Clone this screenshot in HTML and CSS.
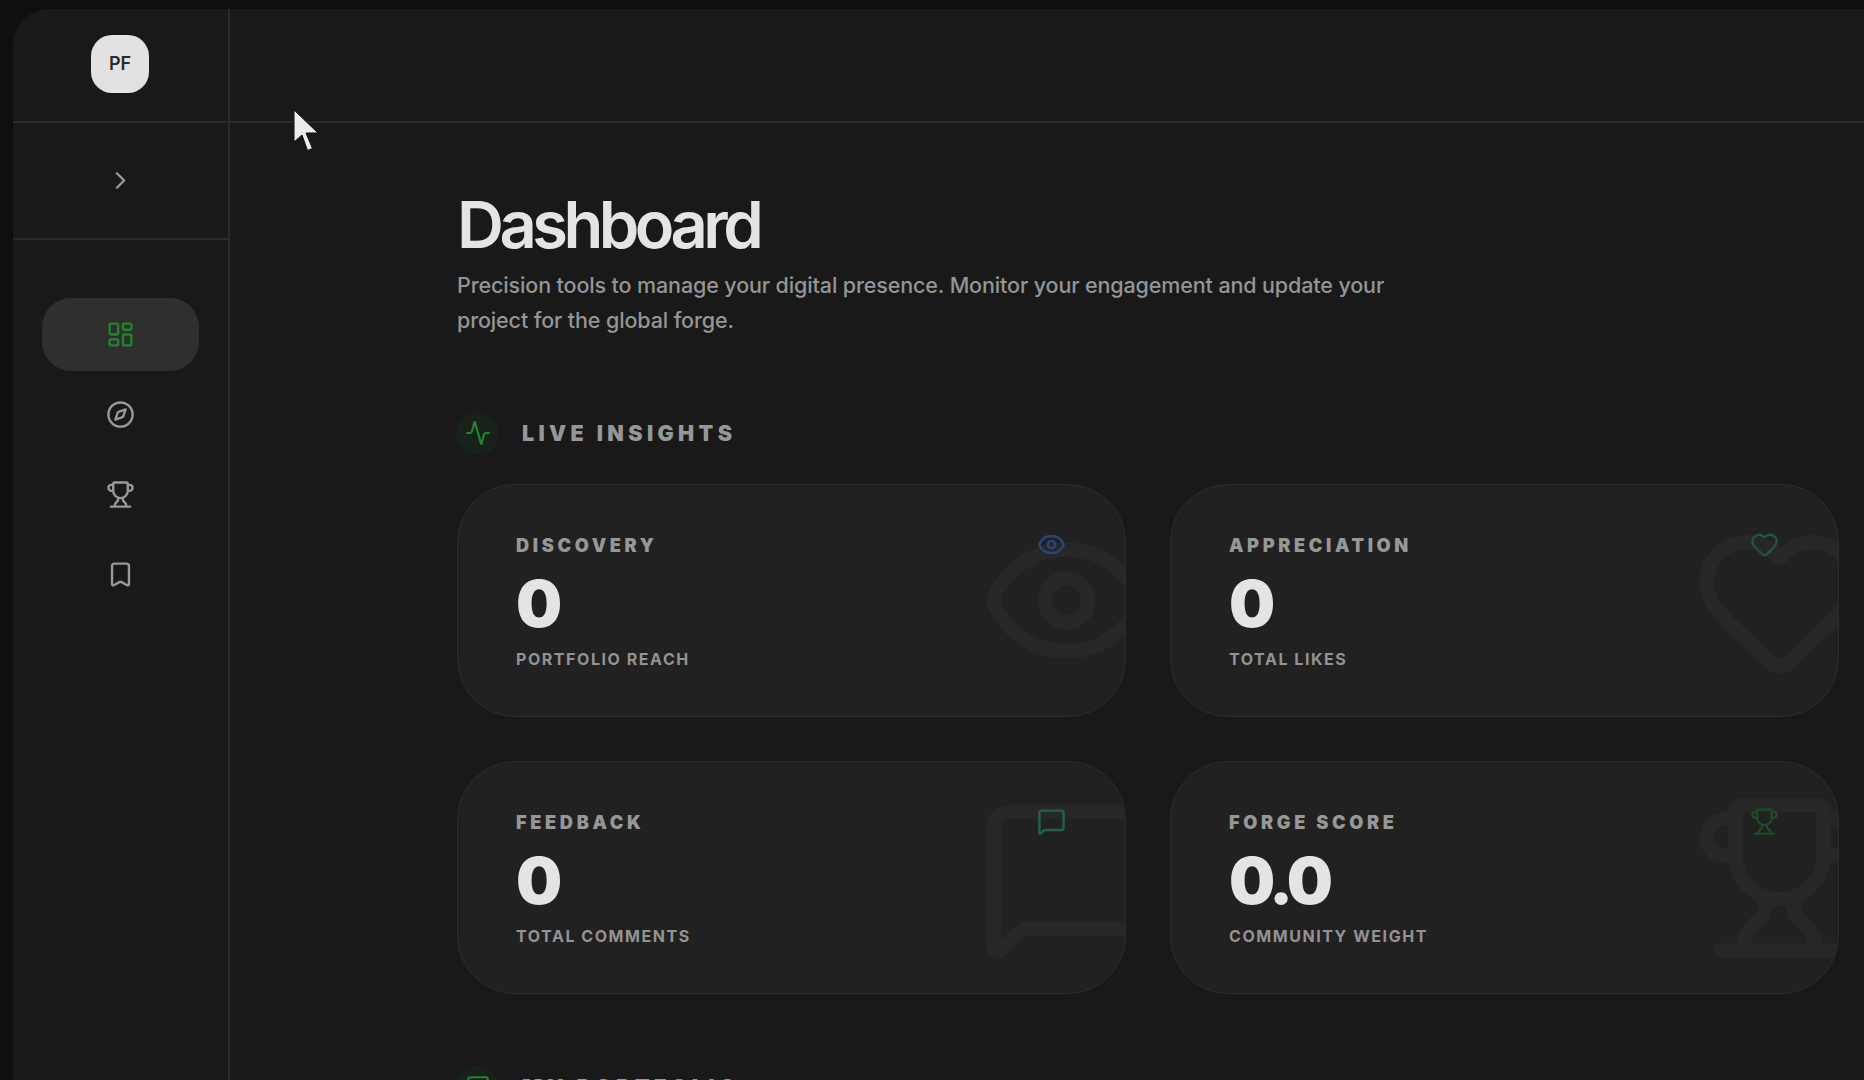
FILE: index.html
```html
<!DOCTYPE html>
<html lang="en">
<head>
<meta charset="utf-8">
<title>Dashboard</title>
<link rel="stylesheet" href="styles.css">
</head>
<body>
<svg class="sprite" aria-hidden="true">
  <symbol id="eye" viewBox="0 0 24 24"><path d="M2.062 12.348a1 1 0 0 1 0-.696 10.75 10.75 0 0 1 19.876 0 1 1 0 0 1 0 .696 10.75 10.75 0 0 1-19.876 0"/><circle cx="12" cy="12" r="3"/></symbol>
  <symbol id="heart" viewBox="0 0 24 24"><path d="M2 9.5a5.5 5.5 0 0 1 9.591-3.676.56.56 0 0 0 .818 0A5.49 5.49 0 0 1 22 9.5c0 2.29-1.5 4-3 5.5l-5.492 5.313a2 2 0 0 1-3 .019L5 15c-1.5-1.5-3-3.2-3-5.5"/></symbol>
  <symbol id="message" viewBox="0 0 24 24"><path d="M22 17a2 2 0 0 1-2 2H6.828a2 2 0 0 0-1.414.586l-2.202 2.202A.71.71 0 0 1 2 21.286V5a2 2 0 0 1 2-2h16a2 2 0 0 1 2 2z"/></symbol>
  <symbol id="trophy" viewBox="0 0 24 24"><path d="M10 14.66v1.626a2 2 0 0 1-.976 1.696A5 5 0 0 0 7 21.978M14 14.66v1.626a2 2 0 0 0 .976 1.696A5 5 0 0 1 17 21.978M18 9h1.5a1 1 0 0 0 0-5H18M4 22h16M6 9a6 6 0 0 0 12 0V3a1 1 0 0 0-1-1H7a1 1 0 0 0-1 1zM6 9H4.5a1 1 0 0 1 0-5H6"/></symbol>
</svg>
<div class="shell">
  <aside class="sidebar">
    <div class="brand"><span class="logo">PF</span></div>
    <div class="expand"><svg class="icon chevron" viewBox="0 0 24 24"><path d="m9 18 6-6-6-6"/></svg></div>
    <nav class="nav">
      <a class="nav-item active"><svg class="icon" viewBox="0 0 24 24"><rect width="7" height="9" x="3" y="3" rx="1"/><rect width="7" height="5" x="14" y="3" rx="1"/><rect width="7" height="9" x="14" y="12" rx="1"/><rect width="7" height="5" x="3" y="16" rx="1"/></svg></a>
      <a class="nav-item"><svg class="icon" viewBox="0 0 24 24"><path d="m16.24 7.76-1.804 5.411a2 2 0 0 1-1.265 1.265L7.76 16.24l1.804-5.411a2 2 0 0 1 1.265-1.265z"/><circle cx="12" cy="12" r="10"/></svg></a>
      <a class="nav-item"><svg class="icon"><use href="#trophy"/></svg></a>
      <a class="nav-item"><svg class="icon" viewBox="0 0 24 24"><path d="M17 3a2 2 0 0 1 2 2v15a1 1 0 0 1-1.496.868l-4.512-2.578a2 2 0 0 0-1.984 0l-4.512 2.578A1 1 0 0 1 5 20V5a2 2 0 0 1 2-2z"/></svg></a>
    </nav>
  </aside>
  <div class="main">
    <header class="topbar"></header>
    <main class="content">
      <h1 class="title">Dashboard</h1>
      <p class="lead">Precision tools to manage your digital presence. Monitor your engagement and update your<br>project for the global forge.</p>
      <h2 class="section"><span class="badge"><svg class="icon" viewBox="0 0 24 24"><path d="M22 12h-2.48a2 2 0 0 0-1.93 1.46l-2.35 8.36a.25.25 0 0 1-.48 0L9.24 2.18a.25.25 0 0 0-.48 0l-2.35 8.36A2 2 0 0 1 4.49 12H2"/></svg></span>LIVE INSIGHTS</h2>
      <div class="cards">
        <article class="card">
          <svg class="icon ghost"><use href="#eye"/></svg>
          <div class="card-head"><span class="label">DISCOVERY</span><svg class="icon blue"><use href="#eye"/></svg></div>
          <div class="value">0</div>
          <div class="caption">PORTFOLIO REACH</div>
        </article>
        <article class="card">
          <svg class="icon ghost"><use href="#heart"/></svg>
          <div class="card-head"><span class="label">APPRECIATION</span><svg class="icon green"><use href="#heart"/></svg></div>
          <div class="value">0</div>
          <div class="caption">TOTAL LIKES</div>
        </article>
        <article class="card">
          <svg class="icon ghost"><use href="#message"/></svg>
          <div class="card-head"><span class="label">FEEDBACK</span><svg class="icon teal"><use href="#message"/></svg></div>
          <div class="value">0</div>
          <div class="caption">TOTAL COMMENTS</div>
        </article>
        <article class="card">
          <svg class="icon ghost"><use href="#trophy"/></svg>
          <div class="card-head"><span class="label">FORGE SCORE</span><svg class="icon forest"><use href="#trophy"/></svg></div>
          <div class="value">0.0</div>
          <div class="caption">COMMUNITY WEIGHT</div>
        </article>
      </div>
      <h2 class="section next"><span class="badge"><svg class="icon" viewBox="0 0 24 24"><rect width="18" height="18" x="3" y="3" rx="2"/></svg></span>MY PORTFOLIO</h2>
    </main>
  </div>
</div>
<svg class="cursor" viewBox="0 0 30 48"><path d="M3 3v32l8-7 5.500 15.500 5-2-6.500-15.500h12z"/></svg>
</body>
</html>
```

FILE: styles.css
```css
* { box-sizing: border-box; }
body {
  margin: 0;
  height: 1080px;
  overflow: hidden;
  padding: 9px 0 0 13px;
  background: #0f0f0f;
  color: #e4e4e4;
  font-family: Inter, "Liberation Sans", sans-serif;
}
.sprite { display: none; }
.icon {
  display: block;
  width: 29px;
  height: 29px;
  flex: none;
  fill: none;
  stroke: currentColor;
  stroke-width: 2;
  stroke-linecap: round;
  stroke-linejoin: round;
}
.shell {
  display: flex;
  height: 1100px;
  background: #191919;
  border-top-left-radius: 36px;
}
.sidebar { width: 217px; flex: none; border-right: 2px solid #2a2a2a; color: #999; }
.brand, .expand {
  display: flex;
  align-items: center;
  justify-content: center;
  border-bottom: 2px solid #2a2a2a;
}
.brand { height: 114px; padding: 0 1px 2px 0; }
.expand { height: 117px; padding-bottom: 1px; }
.logo {
  width: 58px;
  height: 58px;
  border-radius: 21px;
  background: #e2e2e2;
  color: #2b2b2b;
  font-size: 18px;
  font-weight: 600;
  line-height: 57px;
  text-align: center;
}
.nav { display: flex; flex-direction: column; gap: 7px; padding: 58px 29px; }
.nav-item {
  display: flex;
  align-items: center;
  justify-content: center;
  height: 73px;
  border-radius: 29px;
}
.active { background: #2f2f2f; color: #23832f; }
.main { flex: 1; min-width: 0; }
.topbar { height: 114px; border-bottom: 2px solid #2a2a2a; }
.content { padding: 66px 25px 0 227px; }
.title { margin: 0; font-size: 65px; line-height: 72px; font-weight: 600; letter-spacing: -4.500px; }
.lead { margin: 7px 0 0; font-size: 21.500px; line-height: 35px; font-weight: 500; letter-spacing: -0.125px; color: #959595; white-space: nowrap; }
.section {
  display: flex;
  align-items: center;
  gap: 23px;
  height: 44px;
  margin: 73px 0 29px -1px;
  color: #979797;
  font-size: 21.500px;
  font-weight: 900;
  letter-spacing: 4.350px;
}
.badge {
  display: flex;
  align-items: center;
  justify-content: center;
  width: 43px;
  height: 43px;
  border-radius: 50%;
  background: #18221a;
  color: #23832f;
}
.badge .icon { width: 26px; height: 26px; }
.cards { display: grid; grid-template-columns: 1fr 1fr; gap: 44px; }
.card {
  position: relative;
  overflow: hidden;
  height: 233px;
  padding: 44.500px 59px 0 58px;
  border: 1px solid #2c2c2c;
  border-radius: 58px;
  background: #212121;
}
.card-head { display: flex; align-items: center; justify-content: space-between; height: 30px; position: relative; }
.ghost { position: absolute; top: 28px; right: -29px; width: 175px; height: 175px; color: #272727; }
.blue { color: #29447c; }
.green { color: #20553a; }
.teal { color: #23614c; }
.forest { color: #1d4a28; }
.label { font-size: 18.200px; font-weight: 900; letter-spacing: 3.650px; color: #979797; }
.value { margin-top: 8px; font-size: 65px; line-height: 72px; font-weight: 900; letter-spacing: -4.200px; }
.caption { margin-top: 7px; font-size: 16px; line-height: 24px; font-weight: 700; letter-spacing: 1.550px; color: #939393; }
.next { margin-top: 71px; }
.cursor { position: absolute; left: 291px; top: 107px; width: 30px; height: 48px; fill: #ececec; stroke: #111; stroke-width: 1; }
```
